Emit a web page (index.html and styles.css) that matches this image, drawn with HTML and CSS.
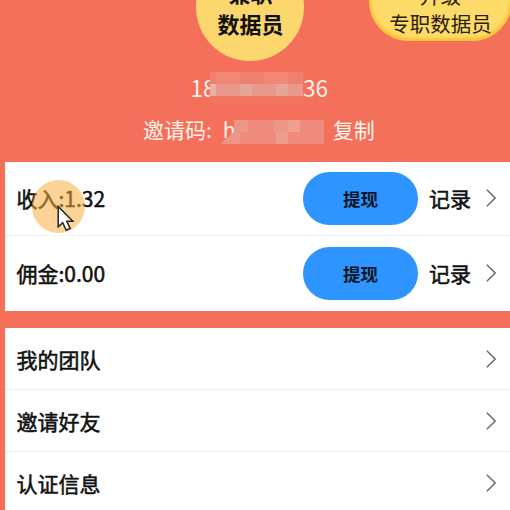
FILE: index.html
```html
<!DOCTYPE html>
<html lang="zh-CN">
<head>
<meta charset="utf-8">
<title>我的</title>
<link rel="stylesheet" href="styles.css">
</head>
<body>
<main class="page">
  <header class="hero">
    <div class="badge badge-round"><span>兼职</span><span>数据员</span></div>
    <div class="badge badge-pill"><span>升级</span><span>专职数据员</span></div>
    <div class="phone"><span>18</span><svg class="mask" width="93" height="32" viewBox="0 0 93 32" shape-rendering="crispEdges"><path fill="#ee8070" d="M0 0h93v12H0z"/><path fill="#f08777" d="M6 0h24v12H6zM54 0h24v12H54z"/><path fill="#e9998c" d="M0 12h93v12H0z"/><path fill="#e9b0a5" d="M0 12h6v12H0z"/><path fill="#e7a598" d="M30 12h12v12H30zM66 12h12v12H66z"/><path fill="#f0765f" d="M0 24h93v8H0z"/></svg><span>36</span></div>
    <div class="invite"><span>邀请码:</span><span class="code">h</span><svg class="mask" width="104" height="24" viewBox="0 0 104 24" shape-rendering="crispEdges"><path fill="#ee8b7c" d="M14 0h90v24H14z"/><path fill="#ec9688" d="M14 0h14v12H14zM54 0h14v12H54z"/><path fill="#ee9f92" d="M68 0h12v12H68z"/><path fill="#ed9588" d="M0 24 14 12h6v12z"/><path fill="#eb9d90" d="M56 12h12v12H56z"/></svg><span class="copy">复制</span></div>
  </header>
  <section class="card">
    <div class="row money"><span class="label">收入:1.32</span><button class="withdraw">提现</button><span class="record">记录</span><svg class="chevron" viewBox="0 0 10 18"><path d="M.8.8 9.2 9 .8 17.2"/></svg></div>
    <div class="row money"><span class="label">佣金:0.00</span><button class="withdraw">提现</button><span class="record">记录</span><svg class="chevron" viewBox="0 0 10 18"><path d="M.8.8 9.2 9 .8 17.2"/></svg></div>
  </section>
  <section class="card">
    <div class="row"><span class="label">我的团队</span><svg class="chevron" viewBox="0 0 10 18"><path d="M.8.8 9.2 9 .8 17.2"/></svg></div>
    <div class="row"><span class="label">邀请好友</span><svg class="chevron" viewBox="0 0 10 18"><path d="M.8.8 9.2 9 .8 17.2"/></svg></div>
    <div class="row"><span class="label">认证信息</span><svg class="chevron" viewBox="0 0 10 18"><path d="M.8.8 9.2 9 .8 17.2"/></svg></div>
  </section>
  <div class="touch"></div>
  <svg class="cursor" viewBox="0 0 18 27"><path d="M1.2 1.5v20.3l4.5-4 3.5 7.5 4-1.9-3.4-7.2h6z"/></svg>
</main>
</body>
</html>
```
FILE: styles.css
```css
* { box-sizing: border-box; }
body {
  margin: 0;
  font-family: "Noto Sans CJK SC", sans-serif;
  color: #111;
}
.page {
  position: relative;
  width: 510px;
  height: 510px;
  overflow: hidden;
  background: #f5705b;
  padding-left: 5.4px;
}
.hero { position: relative; height: 161.5px; padding-top: 72px; }
.badge {
  position: absolute;
  display: flex;
  flex-direction: column;
  align-items: center;
  justify-content: flex-end;
  white-space: nowrap;
}
.badge-round {
  left: 191px;
  top: -47px;
  width: 108px;
  height: 108px;
  border-radius: 50%;
  background: #fcd76e;
  font-size: 22px;
  font-weight: 700;
  line-height: 31px;
  padding-bottom: 22px;
}
.badge-pill {
  left: 363.5px;
  top: -47px;
  width: 143px;
  height: 88px;
  border-radius: 40px;
  background: #fddb69;
  box-shadow: inset 0 -1px 3px 2px #fbc236;
  font-size: 20.5px;
  line-height: 28px;
  color: #2b2010;
  padding-bottom: 4px;
}
.phone, .invite {
  display: flex;
  align-items: center;
  color: #fff3ec;
}
.phone { height: 32px; margin-left: 185px; font-size: 22.5px; }
.phone span { position: relative; top: -1px; }
.phone span:first-child { width: 19.5px; overflow: hidden; }
.mask { flex: none; position: relative; }
.invite { height: 30px; margin: 10px 0 0 137.5px; font-size: 21px; }
.invite .mask { top: 3px; margin-left: -14px; }
.code { width: 11px; margin-left: 11px; overflow: hidden; }
.copy { margin-left: 9px; }
.card { background: #fff; margin-bottom: 17px; }
.row {
  display: flex;
  align-items: center;
  height: 62px;
  padding: 0 14px 0 11px;
  font-size: 21px;
  border-bottom: 1px solid #f0f0f0;
  -webkit-text-stroke: .55px #111;
}
.money { height: 74.75px; }
.row:last-child { border-bottom-color: #fff; }
.label { flex: 1; }
.withdraw {
  width: 115px;
  height: 53px;
  border: 0;
  border-radius: 27px;
  background: #2e94ff;
  color: #0b1420;
  font: 700 17.5px "Noto Sans CJK SC", sans-serif;
  -webkit-text-stroke: 0;
  padding: 0;
}
.record { margin-left: 11px; }
.chevron {
  width: 10px;
  height: 18px;
  margin-left: 15px;
  fill: none;
  stroke: #666;
  stroke-width: 1.4;
}
.touch {
  position: absolute;
  left: 32px;
  top: 180px;
  width: 53px;
  height: 53px;
  border-radius: 50%;
  background: rgba(248, 174, 66, .55);
}
.cursor {
  position: absolute;
  left: 57px;
  top: 205px;
  width: 18px;
  height: 27px;
  fill: #fff;
  stroke: #222;
  stroke-width: 1.5;
}
```
